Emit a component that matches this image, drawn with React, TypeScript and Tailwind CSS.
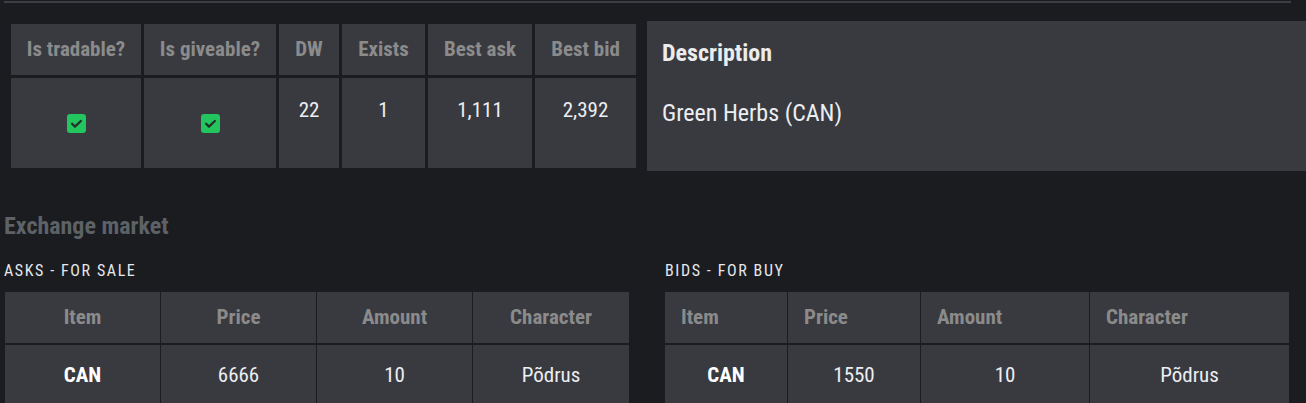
import React from 'react';

interface Order {
  item: string;
  price: number;
  amount: number;
  character: string;
}

const asks: Order[] = [{ item: 'CAN', price: 6666, amount: 10, character: 'Põdrus' }];
const bids: Order[] = [{ item: 'CAN', price: 1550, amount: 10, character: 'Põdrus' }];

function Check() {
  return (
    <span className="inline-flex w-[19px] h-[19px] rounded-[3px] bg-[#22c55e] items-center justify-center align-middle">
      <svg width="15" height="15" viewBox="0 0 24 24" fill="none" stroke="#24302a" strokeWidth="3.6" strokeLinecap="round" strokeLinejoin="round">
        <path d="M5 12.5l4.5 4.5L19 8" />
      </svg>
    </span>
  );
}

const stats = [
  { label: 'Is tradable?', w: 'w-[130px]', value: <Check /> },
  { label: 'Is giveable?', w: 'w-[132px]', value: <Check /> },
  { label: 'DW', w: 'w-[60px]', value: '22' },
  { label: 'Exists', w: 'w-[83px]', value: '1' },
  { label: 'Best ask', w: 'w-[104px]', value: '1,111' },
  { label: 'Best bid', w: 'w-[101px]', value: '2,392' },
];

function OrderTable({ rows, align }: { rows: Order[]; align: 'center' | 'left' }) {
  const head = align === 'center' ? 'text-center' : 'text-left pl-4';
  const widths = align === 'center' ? ['', '', '', ''] : ['w-[123px]', 'w-[133px]', 'w-[169px]', ''];
  const cols = ['Item', 'Price', 'Amount', 'Character'];
  return (
    <table className={`w-[624px] border-separate border-spacing-0 ${align === 'center' ? 'table-fixed' : ''}`}>
      <thead>
        <tr>
          {cols.map((c, i) => (
            <th
              key={c}
              className={`h-[53px] bg-[#393a40] border-b-2 border-[#1b1c1f] text-[21px] font-bold text-[#8b8b8b] ${head} ${widths[i]} ${i < 3 ? 'border-r' : ''}`}
            >
              {c}
            </th>
          ))}
        </tr>
      </thead>
      <tbody>
        {rows.map((r, i) => (
          <tr key={i}>
            <td className="h-[62px] bg-[#393a40] border-r border-[#1b1c1f] text-center text-[21px] font-bold text-white">{r.item}</td>
            <td className="bg-[#393a40] border-r border-[#1b1c1f] text-center text-[21px] text-[#eceef2]">{r.price}</td>
            <td className="bg-[#393a40] border-r border-[#1b1c1f] text-center text-[21px] text-[#eceef2]">{r.amount}</td>
            <td className="bg-[#393a40] text-center text-[21px] text-[#eceef2]">{r.character}</td>
          </tr>
        ))}
      </tbody>
    </table>
  );
}

export default function App() {
  return (
    <div className="min-h-screen bg-[#1b1c1f] overflow-hidden font-['Roboto',sans-serif] [font-stretch:condensed]">
      <div className="pl-1 pr-[15px] pt-px">
        <div className="h-[2px] bg-[#3d3e44]" />
      </div>

      {/* Item details */}
      <div className="flex items-start pl-2 pt-[18px]">
        <table className="border-separate border-spacing-[3px] shrink-0">
          <thead>
            <tr>
              {stats.map(s => (
                <th key={s.label} className={`h-[51px] bg-[#393a40] text-[21px] font-bold text-[#8b8b8b] text-center ${s.w}`}>
                  {s.label}
                </th>
              ))}
            </tr>
          </thead>
          <tbody>
            <tr>
              {stats.map(s => (
                <td
                  key={s.label}
                  className={`h-[90px] bg-[#393a40] text-center text-[21px] text-[#eceef2] ${typeof s.value === 'string' ? 'align-top pt-[17px]' : 'align-middle'}`}
                >
                  {s.value}
                </td>
              ))}
            </tr>
          </tbody>
        </table>
        <div className="flex-1 ml-[8px] h-[150px] bg-[#393a40] pl-[15px] pt-[18px]">
          <h3 className="text-[24px] font-bold text-[#ececec] leading-[28px]">Description</h3>
          <p className="mt-[32px] text-[24px] text-[#eceef2] leading-[28px]">Green Herbs (CAN)</p>
        </div>
      </div>

      {/* Market */}
      <div className="pl-1 pt-[41px]">
        <h2 className="text-[24px] font-bold text-[#5d6267] leading-[28px]">Exchange market</h2>
        <div className="flex gap-[37px] mt-[22px]">
          <div className="w-[624px]">
            <div className="text-[16px] tracking-[0.1em] text-[#e6e8ee] leading-[18px]">ASKS - FOR SALE</div>
            <div className="ml-px mt-[12px]">
              <OrderTable rows={asks} align="center" />
            </div>
          </div>
          <div className="w-[624px]">
            <div className="text-[16px] tracking-[0.1em] text-[#e6e8ee] leading-[18px]">BIDS - FOR BUY</div>
            <div className="mt-[12px]">
              <OrderTable rows={bids} align="left" />
            </div>
          </div>
        </div>
      </div>
    </div>
  );
}
